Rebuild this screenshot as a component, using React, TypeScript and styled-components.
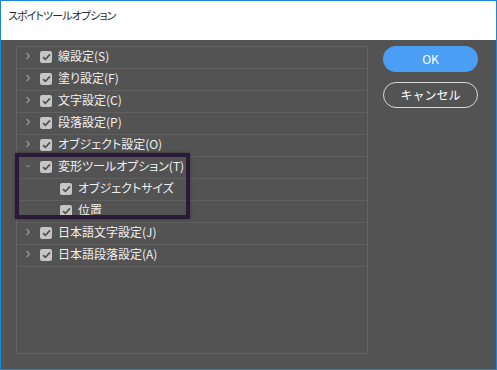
import React from "react";
import styled, { createGlobalStyle } from "styled-components";

const Global = createGlobalStyle`
  html, body { margin: 0; padding: 0; background: #535353; }
  * { box-sizing: border-box; }
`;

const Window = styled.div`
  width: 497px;
  height: 370px;
  border: 1px solid #1a86d9;
  background: #535353;
  display: flex;
  flex-direction: column;
  font-family: "Noto Sans CJK JP", "Noto Sans", sans-serif;
  font-feature-settings: "palt";
`;

const TitleBar = styled.div`
  height: 39px;
  background: #ffffff;
  display: flex;
  align-items: center;
  padding-left: 7px;
  padding-bottom: 12px;
  font-size: 11px;
  letter-spacing: -0.9px;
  color: #2b2b2b;
`;

const Body = styled.div`
  flex: 1;
  display: flex;
  padding: 6px 0 0 15px;
  gap: 15px;
`;

const Panel = styled.div`
  position: relative;
  width: 352px;
  height: 308px;
  border: 1px solid #646464;
`;

const Row = styled.div<{ $child?: boolean }>`
  height: 22px;
  border-bottom: 1px solid #5f5f5f;
  display: flex;
  align-items: center;
  padding-left: ${(p) => (p.$child ? "43px" : "8px")};
  padding-bottom: 4px;
  color: #f0f0f0;
  font-size: 12px;
  white-space: nowrap;
`;

const Chevron = styled.span`
  width: 6px;
  height: 12px;
  display: flex;
  align-items: center;
  justify-content: center;
  margin-right: 9px;
`;

const Box = styled.span`
  width: 12px;
  height: 12px;
  border-radius: 2px;
  background: #c6c6c6;
  display: flex;
  align-items: center;
  justify-content: center;
  margin-right: 6px;
  margin-top: 2px;
`;

const Highlight = styled.div`
  position: absolute;
  left: -2px;
  top: 106px;
  width: 175px;
  height: 66px;
  border: 4px solid #2a1937;
  box-shadow: 0 0 3px rgba(0, 0, 0, 0.35);
  pointer-events: none;
`;

const Buttons = styled.div`
  display: flex;
  flex-direction: column;
  gap: 10px;
  width: 95px;
`;

const Button = styled.button<{ $primary?: boolean }>`
  height: 26px;
  border-radius: 13px;
  font-family: inherit;
  font-size: 12px;
  color: #ffffff;
  background: ${(p) => (p.$primary ? "#4a9ff4" : "transparent")};
  border: ${(p) => (p.$primary ? "none" : "1px solid #d8d8d8")};
  padding: 0;
  padding-bottom: 1px;
`;

const Check = () => (
  <svg width="9" height="8" viewBox="0 0 9 8">
    <path d="M1 4.2 L3.4 6.4 L8 1.4" fill="none" stroke="#4f4f4f" strokeWidth="1.6" />
  </svg>
);

const ChevronIcon = ({ open }: { open?: boolean }) =>
  open ? (
    <svg width="8" height="6" viewBox="0 0 8 6">
      <path d="M1 1.5 L4 4.5 L7 1.5" fill="none" stroke="#9a9a9a" strokeWidth="1.1" />
    </svg>
  ) : (
    <svg width="6" height="8" viewBox="0 0 6 8">
      <path d="M1.5 1 L4.5 4 L1.5 7" fill="none" stroke="#9a9a9a" strokeWidth="1.1" />
    </svg>
  );

type Item = { label: string; child?: boolean; open?: boolean };

const items: Item[] = [
  { label: "線設定(S)" },
  { label: "塗り設定(F)" },
  { label: "文字設定(C)" },
  { label: "段落設定(P)" },
  { label: "オブジェクト設定(O)" },
  { label: "変形ツールオプション(T)", open: true },
  { label: "オブジェクトサイズ", child: true },
  { label: "位置", child: true },
  { label: "日本語文字設定(J)" },
  { label: "日本語段落設定(A)" },
];

export default function App() {
  return (
    <>
      <Global />
      <Window>
        <TitleBar>スポイトツールオプション</TitleBar>
        <Body>
          <Panel>
            {items.map((it) => (
              <Row key={it.label} $child={it.child}>
                {!it.child && (
                  <Chevron>
                    <ChevronIcon open={it.open} />
                  </Chevron>
                )}
                <Box>
                  <Check />
                </Box>
                {it.label}
              </Row>
            ))}
            <Highlight />
          </Panel>
          <Buttons>
            <Button $primary>OK</Button>
            <Button>キャンセル</Button>
          </Buttons>
        </Body>
      </Window>
    </>
  );
}
